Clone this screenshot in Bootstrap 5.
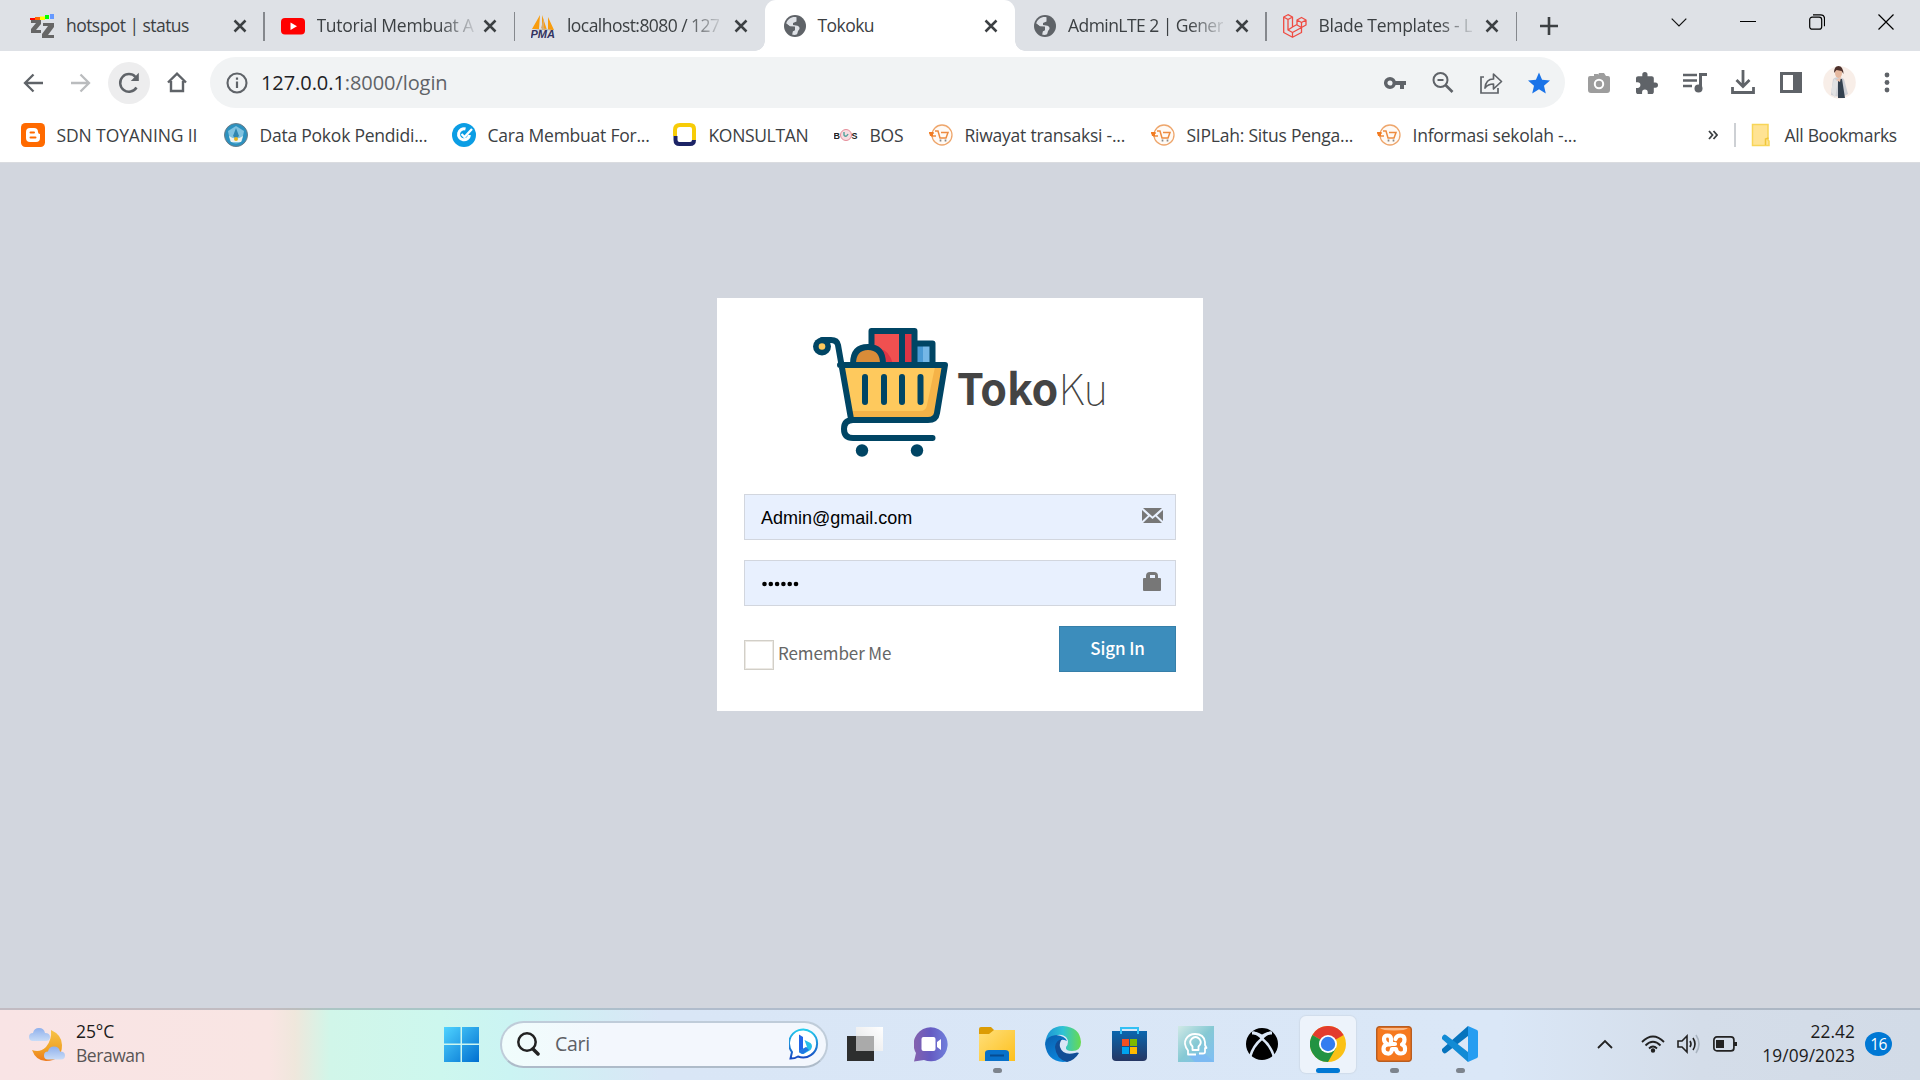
<!DOCTYPE html>
<html lang="id">
<head>
<meta charset="utf-8">
<title>Tokoku</title>
<link href="https://cdn.jsdelivr.net/npm/bootstrap@5.3.0/dist/css/bootstrap.min.css" rel="stylesheet">
<style>
body{width:1920px;height:1080px;overflow:hidden;font-family:"Open Sans","Noto Sans",sans-serif;font-size:17.5px;line-height:24px;color:#3c4043;background:#d2d6de}
svg{display:block;flex:none}
.tabstrip{height:51px;background:#dee1e6;padding-left:13px}
.browser-tab{width:250.5px;height:51px;padding:0 17px 0 17px;position:relative}
.browser-tab .ttl{margin-left:12px;white-space:nowrap;letter-spacing:-.28px;padding-bottom:1px}
.browser-tab .tight{letter-spacing:-.55px}
.browser-tab .fade-end{-webkit-mask-image:linear-gradient(90deg,#000 78%,rgba(0,0,0,.15) 100%)}
.browser-tab::after{content:"";position:absolute;right:-1px;top:12px;width:1.5px;height:29px;background:#85888d}
.browser-tab.no-sep::after{display:none}
.browser-tab.current{background:#fff;border-radius:11px 11px 0 0}
.browser-tab.globe-tab{padding-left:19px}
.browser-tab.current::before,.browser-tab.current::after{content:"";display:block;position:absolute;top:auto;bottom:0;width:10px;height:10px;background:radial-gradient(circle at 0 0,transparent 9.5px,#fff 10px);left:-10px}
.browser-tab.current::after{left:auto;right:-10px;background:radial-gradient(circle at 100% 0,transparent 9.5px,#fff 10px)}
.newtab{width:65px}
.winbtn{width:69px;height:44px}
.toolbar{height:57px;background:#fff;padding:6px 9px 0}
.tool{width:48px;height:51px}
.reload-bg{width:42px;height:42px;background:#ededee}
.omnibox{width:1355px;height:51px;margin-left:9px;background:#f1f3f4;border-radius:26px;padding:0 2px 0 15.5px}
.url{font-size:20px;letter-spacing:-.07px;margin-left:13.5px;color:#5f6368}
.url span{color:#202124}
.bookmarks{height:55px;background:#fff;border-bottom:1.5px solid #dadce0;padding:0 0 1px 21px}
.bm{width:200px;white-space:nowrap;letter-spacing:-.23px}
.bm svg{margin-right:11.5px}
.bm:nth-child(1){width:203px;letter-spacing:-.1px}.bm:nth-child(2){width:228px}.bm:nth-child(3){width:221px}.bm:nth-child(4){width:161px;letter-spacing:-.35px}
.bm:nth-child(5){width:95px}.bm:nth-child(6){width:222px}.bm:nth-child(7){width:226px}
.bm-end{width:212px}
.bm-end .all{margin-left:14px;letter-spacing:-.33px;white-space:nowrap}
.vr-line{width:1.5px;height:24px;background:#cdd0d4;margin:0 15px 0 16px}
.page{height:845px;background:#d2d6de;padding-top:135px}
.login-box{width:486px;height:413px;background:#fff;padding:30px 27px 27px;color:#666}
.logo-row{height:129px;margin-left:69px}
.logo-text{font-family:"Noto Sans CJK JP",sans-serif;font-size:42.8px;line-height:60px;color:#444;margin:0 0 14px 9px;font-weight:100;white-space:nowrap}
.logo-text b{font-weight:700}
.field{height:46px;margin-top:20px;border:1px solid #d2d6de;background:#e8f0fe;padding:1px 12px 0 16px;font-family:"Liberation Sans",Arial,sans-serif;font-size:18px;color:#000}
.logo-row + .field{margin-top:37px}
.actions{margin-top:20px}
.remember{height:58px}
.check-square{width:30px;height:30px;border:1px solid #d2cfc8;box-shadow:inset 0 0 0 1px #ece9e4}
.cjk{font-family:"Noto Sans CJK JP",sans-serif;font-size:17px;letter-spacing:-.1px}
.signin{width:117px;height:46px;border-radius:0;background:#3c8dbc;border:1px solid #367fa9;color:#fff;padding:0 0 3px;font-weight:500}
.taskbar{height:72px;border-top:2px solid rgba(120,130,145,.42);padding-bottom:2px;background:linear-gradient(90deg,#f9e4e5 0,#f9e5e3 270px,#efe7dc 295px,#d1f6e9 330px,#cdf7ee 440px,#cbf4f3 510px,#d9e6f6 660px,#dae7f7 1500px,#d4dde9 1700px,#d2dbe7 1920px);background-origin:border-box;color:#1b1b1b}
.weather{width:444px;padding-left:28px;line-height:24px}
.weather .cap{margin:-2px 0 0 11px;letter-spacing:-.1px}
.weather .cap div{color:#5a5555;letter-spacing:-.45px}
.searchpill{width:328px;height:47px;border:2px solid #bfccd9;border-bottom-color:#aebbc9;border-radius:24px;background:linear-gradient(90deg,#f0fdfc,#f3f7fd 30%);padding:0 6px 0 15px;margin-left:21px}
.searchpill .hint{margin-left:15px;font-size:19.5px;letter-spacing:-.3px;color:#5d6064}
.app{width:66.1px;height:70px;position:relative}
.app.open::after{content:"";position:absolute;bottom:6px;left:29px;width:9px;height:5px;border-radius:3px;background:#7d848d}
.app.focused{z-index:0}
.app.focused::before{content:"";position:absolute;z-index:-1;left:5px;top:7px;width:56px;height:57px;background:#edf3fb;border-radius:6px;box-shadow:0 0 1px 1px #d0dcea}
.app.open.focused::after{left:21px;width:24px;background:#0078d4}
.clock{font-size:17.3px;letter-spacing:.1px;width:118px}
.notif{width:27px;height:24px;margin-left:10px;background:#0078d4;color:#fff;border-radius:50%;font-size:15.5px;letter-spacing:-.5px}
.tray{width:323px}
.tray svg + svg{margin-left:12px}
.tray svg:nth-child(2){margin-left:28px}
</style>
<script src="https://cdn.jsdelivr.net/npm/bootstrap@5.3.0/dist/js/bootstrap.bundle.min.js"></script>
</head>
<body>
<svg width="0" height="0" class="position-absolute">
<symbol id="x" viewBox="0 0 14 14"><path d="M1.500 1.500 12.500 12.500M12.500 1.500 1.500 12.500" stroke="#3c4043" stroke-width="2.500"/></symbol>
<symbol id="globe" viewBox="0 0 22 22"><circle cx="11" cy="11" r="11" fill="#5f6368"/><path d="M12.500 2.200C8 1.200 3.400 4 2.200 8.500L6 11.500l5 .3v3.200l-2.500 1.500L8 19.500c2 .7 3.500.5 5-.3 1-2 .5-3 2-4.500 1.200-1.200.5-3.500-1.500-4L9 10V8l3.500-1.500V4.500Z" fill="#dee1e6"/><path d="M2.200 8.500 6 11.500l5 .3v3.200l-2.500 1.500-.3 3C3.500 18.500 1 13.500 2.200 8.500ZM14 3.500l-1 3.500-3.500 1.500 4.500.5c3 1 4 4 2 7 3.500-3 4-9-2-12.500Z" fill="#5f6368"/></symbol>
<symbol id="siplah" viewBox="0 0 24 24"><circle cx="13" cy="12" r="10" fill="#fffaf5" stroke="#eea66c" stroke-width="1.300"/><path d="M0 10h5M2 13h5M6 8h3l2 7h6l2-5.500H12" fill="none" stroke="#ed8c40" stroke-width="1.500"/><path d="M0 9h4v4H1z" fill="#f27b21"/><path d="M11.500 18.500v-2M16.500 18.500v-2" stroke="#888" stroke-width="1.700"/></symbol>
</svg>

<header>
<div class="tabstrip d-flex">
  <div class="browser-tab d-flex align-items-center"><svg width="24" height="25" viewBox="0 0 24 25"><path d="M0 5h5v2H0z" fill="#f00"/><path d="M5 4h5v3H5z" fill="#f60"/><path d="M10 3.500h5V7h-5z" fill="#ff0"/><path d="M15 2h4v4h-4z" fill="#0f0"/><path d="M20 1h4v5h-4z" fill="#69f"/><path d="M1 7h10v4l-5 6h5v3H1v-4l5-6H1zM13 10h11v4l-6 8h6v3H12v-4l6-8h-5z" fill="#666"/></svg><span class="ttl tight">hotspot | status</span><svg width="14" height="14" class="ms-auto"><use href="#x"/></svg></div>
  <div class="browser-tab d-flex align-items-center"><svg width="24" height="24" viewBox="0 0 24 24"><rect y="4" width="24" height="16.500" rx="4" fill="#f00"/><path d="M9.500 8.500v7.500l6.500-3.700z" fill="#fff"/></svg><span class="ttl fade-end">Tutorial Membuat A</span><svg width="14" height="14" class="ms-auto"><use href="#x"/></svg></div>
  <div class="browser-tab no-sep d-flex align-items-center"><svg width="24" height="24" viewBox="0 0 24 24"><path d="M9 1 1 15h7zM11 1v15h5zM17 3v13h6z" fill="#f89c0e"/><path d="M13 4v12l-3-2z" fill="#dbab6a"/><path d="M2 16.500q11-3 20 0" stroke="#bbb" fill="none"/><text x="-.5" y="24" font-family="Liberation Sans" font-size="10.500" font-weight="bold" font-style="italic" textLength="24.500" lengthAdjust="spacingAndGlyphs" fill="#33335f">PMA</text></svg><span class="ttl fade-end tight">localhost:8080 / 127</span><svg width="14" height="14" class="ms-auto"><use href="#x"/></svg></div>
  <div class="browser-tab current globe-tab d-flex align-items-center"><svg width="22" height="22"><use href="#globe"/></svg><span class="ttl tight">Tokoku</span><svg width="14" height="14" class="ms-auto"><use href="#x"/></svg></div>
  <div class="browser-tab globe-tab d-flex align-items-center"><svg width="22" height="22"><use href="#globe"/></svg><span class="ttl fade-end tight">AdminLTE 2 | Gener</span><svg width="14" height="14" class="ms-auto"><use href="#x"/></svg></div>
  <div class="browser-tab d-flex align-items-center"><svg width="24" height="24" viewBox="0 0 24 24" fill="none" stroke="#ef4b42" stroke-width="1.300" stroke-linejoin="round"><path d="M.7 3 5 .7 9.500 3v10L14 10.500V6l4.500-2.500L23 6v5l-4.500 2.500v5L9.500 23.300.7 18.500zM.7 3 5 5.500 9.500 3M5 5.500v10.500l4.500 2.500 9-5M9.500 13 5 16M9.500 18.500v4.800M14 6l4.500 2.500L23 6M18.500 8.500v5L14 11"/></svg><span class="ttl fade-end">Blade Templates - L</span><svg width="14" height="14" class="ms-auto"><use href="#x"/></svg></div>
  <div class="newtab d-flex align-items-center justify-content-center"><svg width="18" height="18"><path d="M9 0v18M0 9h18" stroke="#3c4043" stroke-width="2.600"/></svg></div>
  <div class="ms-auto d-flex">
    <div class="winbtn d-flex align-items-center justify-content-center"><svg width="16" height="9"><path d="m.7.7 7.300 7.300 7.300-7.300" fill="none" stroke="#111" stroke-width="1.200"/></svg></div>
    <div class="winbtn d-flex align-items-center justify-content-center"><svg width="16" height="2"><path d="M0 .5h16" stroke="#000" stroke-width="1"/></svg></div>
    <div class="winbtn d-flex align-items-center justify-content-center"><svg width="16" height="16"><rect x=".7" y="3.200" width="12" height="12" rx="2.500" fill="none" stroke="#000" stroke-width="1.200"/><path d="M4 .8h7.500q4 0 4 4v7.500" fill="none" stroke="#000" stroke-width="1.200"/></svg></div>
    <div class="winbtn d-flex align-items-center justify-content-center"><svg width="16" height="16"><path d="m.5.5 15 15M15.500.5l-15 15" stroke="#000" stroke-width="1.200"/></svg></div>
  </div>
</div>

<div class="toolbar d-flex">
  <div class="tool d-flex align-items-center justify-content-center"><svg width="20" height="20" fill="none" stroke="#5f6368" stroke-width="2.300"><path d="M20 10H2M10.500 1.500 2 10l8.500 8.500"/></svg></div>
  <div class="tool d-flex align-items-center justify-content-center"><svg width="20" height="20" fill="none" stroke="#babcbe" stroke-width="2.300"><path d="M0 10h18M9.500 1.500 18 10l-8.500 8.500"/></svg></div>
  <div class="tool d-flex align-items-center justify-content-center"><div class="reload-bg rounded-circle d-flex align-items-center justify-content-center"><svg width="22" height="22"><path d="M18.500 15.500A8.800 8.800 0 1 1 17.500 5" fill="none" stroke="#5f6368" stroke-width="2.500"/><path d="M20.800.8V9h-8z" fill="#5f6368"/></svg></div></div>
  <div class="tool d-flex align-items-center justify-content-center"><svg width="20" height="22"><path d="M1 10.500 10 1.700l9 8.800M4 9v10h12V9" fill="none" stroke="#5f6368" stroke-width="2.400"/></svg></div>
  <div class="omnibox d-flex align-items-center">
    <svg width="22" height="22"><circle cx="11" cy="11" r="9.500" fill="none" stroke="#5f6368" stroke-width="2.100"/><path d="M11 9.500V16M11 5.500v2.300" stroke="#5f6368" stroke-width="2.200"/></svg>
    <div class="url"><span>127.0.0.1</span>:8000/login</div>
    <div class="ms-auto d-flex">
      <div class="tool d-flex align-items-center justify-content-center"><svg width="22" height="14"><circle cx="6" cy="7" r="4.300" fill="none" stroke="#5f6368" stroke-width="3.500"/><path d="M11 5h11v4h-2v4h-4V9h-5z" fill="#5f6368"/></svg></div>
      <div class="tool d-flex align-items-center justify-content-center"><svg width="22" height="22" fill="none" stroke="#5f6368" stroke-width="2"><circle cx="8.500" cy="8" r="7"/><path d="M5.500 8h6"/><path d="m13.500 13 7 7" stroke-width="2.600"/></svg></div>
      <div class="tool d-flex align-items-center justify-content-center"><svg width="24" height="24" fill="none" stroke="#5f6368" stroke-width="1.700"><path d="M5 6H2v16h17v-5"/><path d="M6 17c.5-6 3-9 8.500-9V3l8 7.500-8 7.500v-5Q9 13 6 17Z" stroke-linejoin="round"/></svg></div>
      <div class="tool d-flex align-items-center justify-content-center"><svg width="22" height="22" viewBox="2 2 20 19"><path fill="#1a73e8" d="M12 17.270 18.180 21l-1.640-7.030L22 9.240l-7.190-.61L12 2 9.190 8.630 2 9.240l5.460 4.730L5.820 21z"/></svg></div>
    </div>
  </div>
  <div class="ms-auto d-flex">
    <div class="tool d-flex align-items-center justify-content-center"><svg width="22" height="20"><path d="M2 3h4V1h4v1l1-2h5l2 3h2q2 0 2 2v12q0 3-3 3H3q-3 0-3-3V5q0-2 2-2z" fill="#9d9d9d"/><circle cx="11" cy="11" r="4.200" fill="none" stroke="#fff" stroke-width="2"/></svg></div>
    <div class="tool d-flex align-items-center justify-content-center"><svg width="22" height="22" viewBox="2 1 21 21"><path fill="#5f6368" d="M20.500 11H19V7c0-1.100-.9-2-2-2h-4V3.500a2.500 2.500 0 0 0-5 0V5H4c-1.100 0-2 .9-2 2v3.800h1.500a2.700 2.700 0 0 1 0 5.400H2V20c0 1.100.9 2 2 2h3.800v-1.500a2.700 2.700 0 0 1 5.400 0V22H17c1.100 0 2-.9 2-2v-4h1.500a2.500 2.500 0 0 0 0-5z"/></svg></div>
    <div class="tool d-flex align-items-center justify-content-center"><svg width="24" height="20"><path d="M0 2h14M0 7.500h14M0 13h9" stroke="#5f6368" stroke-width="2.500"/><path d="M17.500 15V1.500H24" fill="none" stroke="#5f6368" stroke-width="3"/><circle cx="15.500" cy="15.500" r="4" fill="#5f6368"/></svg></div>
    <div class="tool d-flex align-items-center justify-content-center"><svg width="24" height="25" fill="none" stroke="#5f6368" stroke-width="2.800"><path d="M12 0v16M5.500 10l6.500 6.500 6.500-6.500M1.500 17v5.500h21V17"/></svg></div>
    <div class="tool d-flex align-items-center justify-content-center"><svg width="22" height="21"><path d="M0 0h22v21H0z" fill="#5f6368"/><path d="M3 3h10v15H3z" fill="#fff"/></svg></div>
    <div class="tool d-flex align-items-center justify-content-center"><svg width="33" height="33"><circle cx="16.500" cy="16.500" r="16.300" fill="#f8eee8"/><path d="M10 13q5-4 11 0l4 15q-6 5-17 1z" fill="#cfd0d5"/><path d="M15 13h4l3 19h-7z" fill="#34414f"/><path d="M11 13 8 25l4 7 3-17z" fill="#e2e2e3"/><ellipse cx="15.500" cy="7" rx="3.500" ry="5" fill="#e5b89f"/><path d="M11 7Q11 0 15.500 0t5 8l-2-3-5-1z" fill="#4d302b"/><path d="m13 14 5-3-1 5z" fill="#ebc3ae"/></svg></div>
    <div class="tool d-flex align-items-center justify-content-center"><svg width="6" height="22" fill="#5f6368"><circle cx="3" cy="3" r="2.400"/><circle cx="3" cy="10.500" r="2.400"/><circle cx="3" cy="18" r="2.400"/></svg></div>
  </div>
</div>

<div class="bookmarks d-flex align-items-center">
  <div class="bm d-flex align-items-center"><svg width="24" height="24"><rect width="24" height="24" rx="4.500" fill="#ff6a00"/><path d="M9 5h4q4 0 4 4 0 2 2 2v4q0 4-4 4H9q-4 0-4-4V9q0-4 4-4z" fill="#fff"/><path d="M9.500 9.500h3.500M9.500 14.500h5" stroke="#ff6a00" stroke-width="2" stroke-linecap="round"/></svg>SDN TOYANING II</div>
  <div class="bm d-flex align-items-center"><svg width="24" height="24"><circle cx="12" cy="12" r="11.500" fill="#2c91bf" stroke="#697b87"/><path d="m12 3 8 5-2 10q-6 5-12 0L4 8z" fill="#7fc2e0"/><path d="M5 13q7 5 14 0l-2 6H7z" fill="#edf3f2"/><path d="m12 5 3 8-3 3-3-3z" fill="#2f86b0"/><circle cx="12" cy="16" r="2" fill="#e7b521"/></svg>Data Pokok Pendidi...</div>
  <div class="bm d-flex align-items-center"><svg width="24" height="24"><circle cx="12" cy="12" r="12" fill="#0b9de4"/><path d="M17.500 12a5.500 5.500 0 1 1-4-6" fill="none" stroke="#fff" stroke-width="3"/><path d="m9.500 11 3 3L20 6" fill="none" stroke="#fff" stroke-width="2.300"/></svg>Cara Membuat For...</div>
  <div class="bm d-flex align-items-center"><svg width="24" height="24"><path d="M2 13V7q0-5 5-5h10q4 0 4 4v11" fill="none" stroke="#f7cc08" stroke-width="4"/><path d="M2.500 13v4q0 4 4 4H17q4 0 4-4" fill="none" stroke="#1c2466" stroke-width="4"/></svg>KONSULTAN</div>
  <div class="bm d-flex align-items-center"><svg width="24" height="24"><circle cx="12" cy="12" r="5.500" fill="#f8dce0" stroke="#e58d99"/><text x="-.5" y="16" font-size="9" font-family="Liberation Sans" font-weight="bold" fill="#222">B</text><text x="17.500" y="16" font-size="9" font-family="Liberation Sans" font-weight="bold" fill="#222">S</text><path d="M10 9v3q2 3 4-1" stroke="#5ca5a0" fill="none" stroke-width="1.500"/></svg>BOS</div>
  <div class="bm d-flex align-items-center"><svg width="24" height="24"><use href="#siplah"/></svg>Riwayat transaksi -...</div>
  <div class="bm d-flex align-items-center"><svg width="24" height="24"><use href="#siplah"/></svg>SIPLah: Situs Penga...</div>
  <div class="bm d-flex align-items-center"><svg width="24" height="24"><use href="#siplah"/></svg>Informasi sekolah -...</div>
  <div class="bm-end ms-auto d-flex align-items-center"><svg width="10" height="10" fill="none" stroke="#3c4043" stroke-width="1.800"><path d="m1 1 3.500 4L1 9M5.500 1 9 5 5.500 9"/></svg><span class="vr-line"></span><svg width="20" height="24"><path d="M1.500 1.500h15.500V17l1 1v4.500H1.500z" fill="#ffe393" stroke="#f8d557" stroke-width="1.500"/><path d="M14.500 22v-6l3-1" fill="none" stroke="#efc63a" stroke-width="1.500"/></svg><span class="all">All Bookmarks</span></div>
</div>
</header>

<main class="page">
  <div class="login-box mx-auto">
    <div class="logo-row d-flex align-items-center">
      <svg width="135" height="129" viewBox="0 0 135 129">
        <path d="M29 38h103l-8 46q-1 7-8 7H38z" fill="#fec95d"/><path d="M122 39h8l-8 45q-2 7-8 7H38l-2-8h71q6 0 7-6z" fill="#f5b348"/>
        <path d="M58 3h42v33H58z" fill="#f05050"/><path d="M88 3h12v33H88zM67 21q9 1 13 15h-9z" fill="#dc3545"/><path d="M102 15h17v21h-17z" fill="#4a9ad4"/><path d="M110 16h7v20h-7z" fill="#75b7e6"/>
        <path d="M40 36q0-17 15-17t15 17z" fill="#d98c38"/>
        <g fill="none" stroke="#004564" stroke-width="6" stroke-linecap="round" stroke-linejoin="round">
          <path d="M58.500 18V3h43v33M89 3v33M104 15.500h15.500V36M40 36q0-17 15-17t15 17"/>
          <path d="M27 37h105l-8 48q-1 7-9 7H40q-9 0-9 9t9 9h79.500M38 91 25 17Q24 12 18 12H9"/>
          <path d="M52 49v25M71 49v25M89 49v25M107.500 49v25"/>
        </g>
        <circle cx="9" cy="18.500" r="9" fill="#004564"/><circle cx="9" cy="18.500" r="3.300" fill="#fec95d"/><g fill="#004564"><circle cx="49" cy="122.500" r="6.200"/><circle cx="104" cy="122.500" r="6.200"/></g>
      </svg>
      <div class="logo-text"><b>Toko</b>Ku</div>
    </div>
    <div class="field d-flex align-items-center justify-content-between"><span>Admin@gmail.com</span><svg width="21" height="16" class="mb-1"><path d="M1 0h19l-9.500 8.500zM0 2l6 5.500L0 13zM21 2l-6 5.500 6 5.500zM1 15l6.500-6.500 3 2.500 3-2.500L20 15z" fill="#777"/></svg></div>
    <div class="field d-flex align-items-center justify-content-between"><svg width="38" height="6" fill="#000"><circle cx="3.500" cy="3" r="2.300"/><circle cx="9.800" cy="3" r="2.300"/><circle cx="16.100" cy="3" r="2.300"/><circle cx="22.400" cy="3" r="2.300"/><circle cx="28.700" cy="3" r="2.300"/><circle cx="35" cy="3" r="2.300"/></svg><svg width="20" height="20" class="mb-1"><path d="M1 6h2V4q0-4 4-4h4q4 0 4 4v2h2q1 0 1 1v11q0 1-1 1H1q-1 0-1-1V7q0-1 1-1zm6 0h5V3H7z" fill="#777"/></svg></div>
    <div class="actions d-flex justify-content-between">
      <div class="remember d-flex align-items-center cjk"><span class="check-square"></span><span class="ms-1 pb-1">Remember Me</span></div>
      <button class="btn signin cjk">Sign In</button>
    </div>
  </div>
</main>

<footer class="taskbar d-flex align-items-center">
  <div class="weather d-flex align-items-center">
    <svg width="37" height="35" viewBox="0 0 37 35"><defs><linearGradient id="mn" x2="0" y2="1"><stop stop-color="#f7c447"/><stop offset=".6" stop-color="#f0a428"/><stop offset="1" stop-color="#ee7a1c"/></linearGradient><linearGradient id="cl" x2="0" y2="1"><stop stop-color="#8fb0ec"/><stop offset="1" stop-color="#c9dcf7"/></linearGradient></defs><path d="M23 3q11 5 11 15 0 16-16 16-10 0-14-11 8 3 14-3 6-7 5-17z" fill="url(#mn)"/><path id="cloud" d="M5 14q-4 0-4-4t4-4q1-5 6-5t6 5q5 0 5 4t-4 4z" fill="url(#cl)"/><use href="#cloud" x="15" y="18.500"/></svg>
    <div class="cap">25°C<div>Berawan</div></div>
  </div>
  <svg width="35" height="35"><defs><linearGradient id="wn" gradientUnits="userSpaceOnUse" x2="35" y2="35"><stop stop-color="#4fd3ff"/><stop offset="1" stop-color="#006fd0"/></linearGradient></defs><path d="M0 0h16.500v16.500H0zM18 0h17v16.500H18zM0 18h16.500v17H0zM18 18h17v17H18z" fill="url(#wn)"/></svg>
  <div class="searchpill d-flex align-items-center"><svg width="23" height="24" fill="none" stroke="#222"><circle cx="10" cy="10" r="8.700" stroke-width="2.500"/><path d="m16 17 5 5" stroke-width="3.500" stroke-linecap="round"/></svg><span class="hint">Cari</span>
    <svg class="ms-auto" width="31" height="32" viewBox="0 0 31 32"><defs><linearGradient id="bg" x2="0" y2="1"><stop stop-color="#25cbed"/><stop offset="1" stop-color="#174ac3"/></linearGradient></defs><path d="M1.500 30.500 3 24A14 14 0 1 1 9 28.500Q6 30.500 1.500 30.500z" fill="#fff" stroke="url(#bg)" stroke-width="2"/><path d="m10 6.500 4 2.500v12l-4 4z" fill="#2366e8"/><path d="m15.500 12 6 3q3 3 0 7l-7 4q-3 0-4.500-3l8-4z" fill="#27bfe9"/><path d="m10 23 7-4 3 3-6 4q-3 0-4-3z" fill="#2078e3"/></svg></div>
  <div class="d-flex ms-1">
    <div class="app d-flex align-items-center justify-content-center"><svg width="36" height="34"><defs><linearGradient id="tv" x1="1" x2="0" y2="1"><stop stop-color="#fff"/><stop offset="1" stop-color="#e2e3e5"/></linearGradient></defs><path d="M0 9h27v25H0z" fill="#2d2e2e"/><path d="M9 0h27v24H9z" fill="url(#tv)"/><path d="M9 9h18v15H9z" fill="#aaa"/></svg></div>
    <div class="app d-flex align-items-center justify-content-center"><svg width="34" height="35"><defs><linearGradient id="ch" x1="0" y1=".3" x2="1" y2=".3"><stop stop-color="#8562ad"/><stop offset=".5" stop-color="#655bc2"/><stop offset="1" stop-color="#7080dc"/></linearGradient></defs><path d="M0 34.500 2 26A17 17 0 1 1 10 33z" fill="url(#ch)"/><rect x="7.500" y="10" width="14" height="14" rx="2" fill="#fff"/><path d="m23 15 4-3v11l-4-3z" fill="#fff"/></svg></div>
    <div class="app open d-flex align-items-center justify-content-center"><svg width="36" height="34"><defs><linearGradient id="fo" x2="1" y2="1"><stop stop-color="#ffdf7b"/><stop offset="1" stop-color="#fdc01d"/></linearGradient></defs><path d="M0 2q0-2 2-2h10l4 4h20v8H0z" fill="#dc9c05"/><path d="M0 7h10l5-4h21v31H0z" fill="url(#fo)"/><path d="M6 34V26q0-3 4-3h16q4 0 4 3v8z" fill="#0871ca"/><path d="M11 28.500h14" stroke="#064c91" stroke-width="2"/></svg></div>
    <div class="app d-flex align-items-center justify-content-center"><svg width="36" height="36"><defs><linearGradient id="ed"><stop stop-color="#1b90d6"/><stop offset=".5" stop-color="#2fc3d5"/><stop offset="1" stop-color="#68db4e"/></linearGradient><linearGradient id="eb" x2=".5" y2="1"><stop stop-color="#0a5fae"/><stop offset="1" stop-color="#0b86dc"/></linearGradient></defs><path d="M0 18Q2 0 18 0q17 1 18 16 0 9-9 9-7 0-6-4 4-5 0-10-9-7-21 7z" fill="url(#ed)"/><path d="M0 18Q1 10 11 9q9 1 11 6-9-4-9 5 2 11 13 14-3 2-8 2Q2 35 0 18z" fill="url(#eb)"/><path d="M17 13q-6 1-7 8 1 12 12 15 8-2 12-9-2-1-4 0-12 3-15-6-1-4 2-8z" fill="#114d96"/></svg></div>
    <div class="app d-flex align-items-center justify-content-center"><svg width="35" height="36"><defs><linearGradient id="st" x2="0" y2="1"><stop stop-color="#0a66ae"/><stop offset="1" stop-color="#263763"/></linearGradient></defs><path d="M0 5h35v26q0 4-4 4H4q-4 0-4-4z" fill="url(#st)"/><path d="M9 8V2h17v6" fill="none" stroke="#33c0f4" stroke-width="2"/><path d="M10 13h7v7h-7z" fill="#f25022"/><path d="M18 13h7v7h-7z" fill="#7fba00"/><path d="M10 21h7v7h-7z" fill="#00a4ef"/><path d="M18 21h7v7h-7z" fill="#ffb900"/></svg></div>
    <div class="app d-flex align-items-center justify-content-center"><svg width="36" height="36"><defs><linearGradient id="fc" x2="1" y2="1"><stop stop-color="#d0e9e6"/><stop offset=".5" stop-color="#86c9d4"/><stop offset="1" stop-color="#7ebef5"/></linearGradient></defs><path d="M0 0h36v36H0z" fill="url(#fc)"/><path d="m10 29 17-1 9 8H17z" fill="#7cbaf2"/><g fill="none" stroke="#fff" stroke-width="1.800" stroke-linejoin="round"><path d="M18 28.500H10v-4Q5 18 8 13q3-5 9-5 9 0 10 8v3l1.500 3H27v4q0 1.500-2 1.500h-4"/><path d="M14.500 24v-3.500q-4-4-1-7.500 4-4 8 0 3 4-1 7.500V24z"/></g></svg></div>
    <div class="app d-flex align-items-center justify-content-center"><svg width="32" height="32"><circle cx="16" cy="16" r="16" fill="#000"/><path d="M6 3.500q4-.5 10 3 6-3.500 10-3v3Q20 6 16 9.500 12 6 6 6.500z" fill="#dae7f7"/><path d="M4 29Q7 18 16 10.500 25 18 28 29M7 4.500q6 2 9 6 3-4 9-6" fill="none" stroke="#dae7f7" stroke-width="2.600"/></svg></div>
    <div class="app open focused d-flex align-items-center justify-content-center"><svg width="36" height="36"><circle cx="18" cy="18" r="18" fill="#fbc116"/><path d="M18 18 2.400 9A18 18 0 0 1 33.600 9z" fill="#e33b2e"/><path d="M2.400 9A18 18 0 0 0 18 36l8-14-8-4z" fill="#229342"/><circle cx="18" cy="18" r="9" fill="#fff"/><circle cx="18" cy="18" r="7.200" fill="#327df0"/></svg></div>
    <div class="app open d-flex align-items-center justify-content-center"><svg width="36" height="36"><rect x=".7" y=".7" width="34.600" height="34.600" rx="3" fill="#f6791f" stroke="#b95d20" stroke-width="1.500"/><path d="M4 2h28q-2 2.500-14 2.500T4 2z" fill="#fbb987"/><g fill="none" stroke="#fff" stroke-width="4.200" stroke-linecap="round" stroke-linejoin="round"><path d="M14 18.500H11.500q-4 .5-4 4.500t4 4.500 4.500-4.500h4q.5 4.500 5 4.500t4-5q0-3-3-4 2.500-1.500 2.500-5 0-4-4-4t-5 3.500"/><path d="M11 18q-3-2-3-5 0-3.500 3.500-3.500T15 13v5h4"/></g></svg></div>
    <div class="app open d-flex align-items-center justify-content-center"><svg width="36" height="36"><path d="M26 0v10L4 27q-1.500 1-3-.5L0 25q-1-1 0-2z" fill="#0673bd"/><path d="M26 36V26L4 9q-1.500-1-3 .5L0 11q-1 1 0 2z" fill="#128bd5"/><path d="m26 0 9 4q1 .5 1 2v24q0 1.500-1 2l-9 4z" fill="#269df1"/></svg></div>
  </div>
  <div class="tray ms-auto d-flex align-items-center">
    <svg width="16" height="10"><path d="m1 9 7-7 7 7" fill="none" stroke="#222" stroke-width="1.800"/></svg>
    <svg width="24" height="18" fill="none" stroke="#222" stroke-width="1.800"><path d="M1 7q11-11 22 0M4.500 10.500q7.500-7.500 15 0M8 13.500q4-4 8 0"/><circle cx="12" cy="15.500" r="1.300" fill="#222"/></svg>
    <svg width="24" height="20" fill="none" stroke="#222" stroke-width="1.600"><path d="M1 7h4l5-5v16l-5-5H1zM13 7q2 3 0 6M16 4q4 6 0 12"/><path d="M19 1q6 9 0 18" stroke="#a9b4c0"/></svg>
    <svg width="24" height="16"><rect x=".9" y=".9" width="20" height="14" rx="3" fill="none" stroke="#222" stroke-width="1.700"/><path d="M3 4h8v8H3zM21 6h3v4h-3z" fill="#222"/></svg>
    <div class="clock text-end">22.42<br>19/09/2023</div>
    <div class="notif d-flex align-items-center justify-content-center">16</div>
  </div>
</footer>
</body>
</html>
